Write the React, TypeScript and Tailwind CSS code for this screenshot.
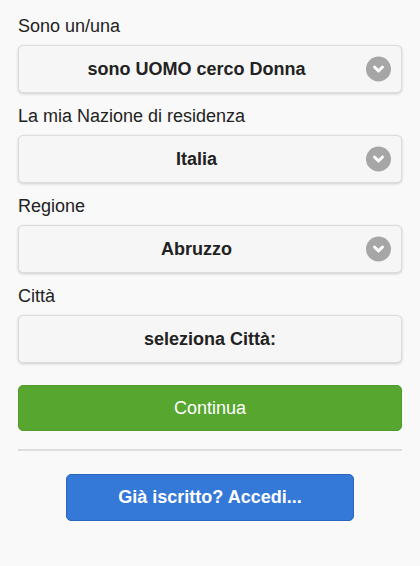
import React from "react";

function Chevron() {
  return (
    <span className="absolute right-[10px] top-1/2 -translate-y-1/2 w-[25px] h-[25px] rounded-full bg-[#a6a6a6] flex items-center justify-center">
      <svg width="15" height="15" viewBox="0 0 15 15">
        <path d="M3.5 5.5 L7.5 9.5 L11.5 5.5" fill="none" stroke="#fff" strokeWidth="3" strokeLinecap="round" strokeLinejoin="round" />
      </svg>
    </span>
  );
}

function Field({ label, value, icon = true }: { label: string; value: string; icon?: boolean }) {
  return (
    <div className="flex flex-col">
      <div className="h-[42px] flex items-center text-[18px] text-[#222] leading-none pt-[3px]">{label}</div>
      <div className={`relative h-[48px] rounded-[5px] border border-[#dcdcdc] bg-[#f6f6f6] shadow-[0_1px_3px_rgba(0,0,0,0.18)] flex items-center justify-center font-bold text-[18px] text-[#222] ${icon ? "pr-[27px]" : ""}`}>
        {value}
        {icon && <Chevron />}
      </div>
    </div>
  );
}

export default function App() {
  return (
    <div className="w-[420px] h-[566px] bg-[#f9f9f9] px-[18px] pt-[3px]" style={{ fontFamily: '"Liberation Sans", Arial, sans-serif' }}>
      <div className="flex flex-col">
        <Field label="Sono un/una" value="sono UOMO cerco Donna" />
        <Field label="La mia Nazione di residenza" value="Italia" />
        <Field label="Regione" value="Abruzzo" />
        <Field label="Città" value="seleziona Città:" icon={false} />
      </div>
      <button className="mt-[22px] w-full h-[46px] rounded-[5px] bg-[#57a630] border border-[#4e9a2a] text-white text-[18px] flex items-center justify-center">
        Continua
      </button>
      <div className="mt-[18px] h-[2px] bg-[#dedede]" />
      <div className="flex justify-center mt-[23px]">
        <button className="w-[288px] h-[47px] rounded-[5px] bg-[#3478d8] border border-[#2b66bd] text-white font-bold text-[18px] flex items-center justify-center">
          Già iscritto? Accedi...
        </button>
      </div>
    </div>
  );
}
